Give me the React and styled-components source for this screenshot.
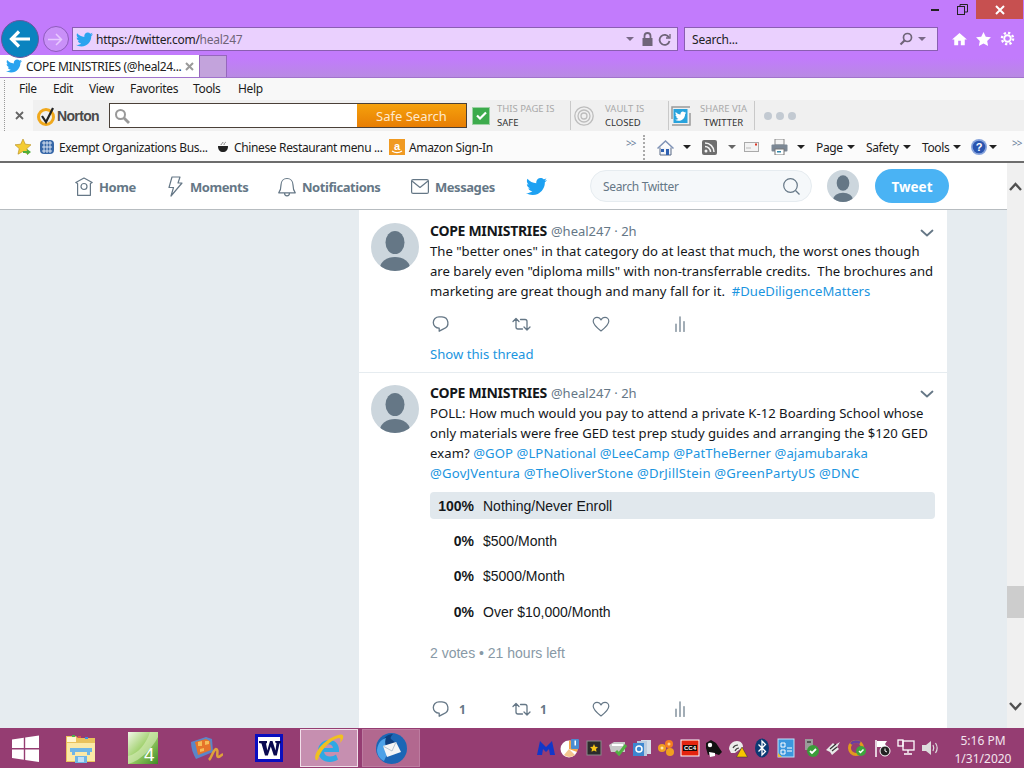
import React from "react";
import styled, { createGlobalStyle } from "styled-components";
import { FaTwitter } from "react-icons/fa";

const Global = createGlobalStyle`
  html, body { margin: 0; padding: 0; width: 1024px; height: 768px; overflow: hidden; background: #fff; }
  * { box-sizing: border-box; }
  svg { flex: none; }
`;
const UI = `"Noto Sans", "Open Sans", sans-serif`;
const Page = styled.div`width:1024px;height:768px;display:flex;flex-direction:column;overflow:hidden;font-family:${UI};color:#111;`;

/* ---------- browser chrome ---------- */
const Chrome = styled.div`height:78px;flex:none;background:linear-gradient(#c27bfc 0,#c27bfc 58px,#b88ae2 78px);position:relative;border-bottom:1px solid #a173cc;`;
const WindowControls = styled.div`height:19px;display:flex;justify-content:flex-end;align-items:flex-start;padding-right:1px;`;
const WinBtn = styled.div`width:${p=>p.$w}px;height:19px;display:flex;align-items:center;justify-content:center;background:${p=>p.$close?"#c75050":"transparent"};`;
const AddressRow = styled.div`height:38px;display:flex;align-items:flex-start;padding-left:1px;position:relative;z-index:2;`;
const BackBtn = styled.div`width:38px;height:38px;border-radius:50%;background:#0a83bf;border:1px solid #6a55a0;display:flex;align-items:center;justify-content:center;flex:none;margin-top:1px;`;
const ForwardBtn = styled.div`width:26px;height:26px;border-radius:50%;border:1px solid #8e5cbc;background:#c990f8;display:flex;align-items:center;justify-content:center;flex:none;margin:7px 0 0 4px;`;
const UrlBox = styled.div`height:24px;margin-top:8px;background:#ead0fe;border:1px solid #8a5eb2;display:flex;align-items:center;`;
const AddressBox = styled(UrlBox)`width:606px;margin-left:3px;padding:0 6px 0 3px;`;
const SearchBox = styled(UrlBox)`width:254px;margin-left:6px;padding:0 11px 0 7px;font-size:12px;color:#222;justify-content:space-between;letter-spacing:-.2px;`;
const SearchTools = styled.span`display:flex;align-items:center;`;
const Url = styled.span`font-size:12px;letter-spacing:-.25px;margin-left:3px;color:#222;flex:1;white-space:nowrap;& em{font-style:normal;color:#6f6478;}`;
const RightTools = styled.div`display:flex;align-items:center;gap:9px;margin:12px 0 0 14px;`;
const TabRow = styled.div`height:22px;display:flex;position:absolute;left:0;bottom:0;`;
const ActiveTab = styled.div`width:199px;height:22px;background:#fff;display:flex;align-items:center;padding:0 5px 0 6px;font-size:12px;letter-spacing:-.35px;color:#222;white-space:nowrap;`;
const TabLabel = styled.span`flex:1;margin-left:4px;`;
const NewTab = styled.div`width:28px;height:22px;background:#c3a3dc;border:1px solid #9667bd;border-bottom:none;`;

const Toolbars = styled.div`height:85px;flex:none;background:#f8f8f8;border-bottom:2px solid #6d6d6d;position:relative;`;
const Grip = styled.div`position:absolute;left:4px;top:2px;bottom:2px;border-left:1px dotted #999;`;
const MenuBar = styled.div`height:22px;display:flex;align-items:center;padding:0 0 2px 19px;font-size:12px;letter-spacing:-.35px;color:#1c1c1c;`;
const MenuItem = styled.span`width:${p=>p.$w}px;`;
const NortonRow = styled.div`height:31px;display:flex;align-items:center;position:relative;`;
const CloseX = styled.div`width:33px;display:flex;justify-content:center;padding-left:5px;`;
const NortonBand = styled.div`flex:1;height:31px;background:#f0f0f0;display:flex;align-items:center;`;
const NortonLogo = styled.div`width:76px;display:flex;align-items:center;padding-left:4px;font:bold 14px "Liberation Sans",sans-serif;letter-spacing:-.65px;color:#4a4a4a;`;
const NortonSearch = styled.div`width:358px;height:25px;border:1px solid #4a4038;background:#fff;display:flex;align-items:center;`;
const SafeBtn = styled.div`width:109px;height:23px;margin-left:auto;background:linear-gradient(#f5a10c,#e87e04);color:#ffe9cc;font-size:13px;display:flex;align-items:center;justify-content:center;`;
const Shield = styled.div`width:18px;height:18px;background:#3cab4c;border:1px solid #9fd3a6;margin-left:5px;display:flex;align-items:center;justify-content:center;flex:none;`;
const NSlot = styled.div`width:${p=>p.$w}px;padding-left:${p=>p.$pl||0}px;font-size:9.5px;line-height:14px;color:#aaa;white-space:nowrap;text-align:${p=>p.$center?"center":"left"};& b{display:block;font-weight:400;color:#333;}`;
const NSep = styled.div`width:1px;height:29px;background:#c9c9c9;flex:none;`;
const NIcon = styled.div`width:${p=>p.$w}px;display:flex;justify-content:center;flex:none;`;
const Dots = styled.div`display:flex;gap:4px;margin-left:9px;& i{width:8px;height:8px;border-radius:50%;background:#c3cad2;}`;
const FavRow = styled.div`height:30px;display:flex;align-items:center;font-size:12px;letter-spacing:-.36px;color:#1c1c1c;background:#fbfbfb;position:relative;padding:2px 0 0 15px;`;
const FavItem = styled.div`display:flex;align-items:center;white-space:nowrap;width:${p=>p.$w}px;flex:none;gap:${p=>p.$gap||4}px;`;
const Chevrons = styled.span`font-size:10px;color:#6a7f9c;width:${p=>p.$w}px;flex:none;margin-top:-8px;letter-spacing:-1px;`;
const DotSep = styled.div`height:25px;border-left:2px dotted #aaa;width:14px;flex:none;`;
const Caret = styled.i`display:inline-block;width:0;height:0;border-left:4px solid transparent;border-right:4px solid transparent;border-top:4px solid ${p=>p.$c||"#222"};margin-left:${p=>p.$ml||4}px;flex:none;`;
const CmdItem = styled.div`display:flex;align-items:center;width:${p=>p.$w}px;flex:none;`;

/* ---------- twitter ---------- */
const Main = styled.div`flex:1;min-height:0;display:flex;`;
const Site = styled.div`flex:1;min-width:0;display:flex;flex-direction:column;background:#e6ecf0;`;
const Nav = styled.div`height:47px;flex:none;background:#fff;border-bottom:1px solid #b7bcc0;display:flex;align-items:center;padding-left:75px;`;
const NavLink = styled.div`display:flex;align-items:center;width:${p=>p.$w}px;flex:none;gap:${p=>p.$gap}px;padding-top:1px;font:700 13px "Noto Sans",sans-serif;letter-spacing:-.45px;color:#657786;white-space:nowrap;`;
const SearchField = styled.div`width:222px;height:32px;margin-left:23px;border:1px solid #e6ecf0;border-radius:16px;background:#f5f8fa;display:flex;align-items:center;justify-content:space-between;padding:1px 11px 0 12px;font-size:12px;letter-spacing:-.35px;color:#657786;flex:none;`;
const TweetBtn = styled.div`width:74px;height:34px;border-radius:17px;background:#4ab3f4;color:#fff;padding-top:1px;font:700 13.5px "Noto Sans",sans-serif;display:flex;align-items:center;justify-content:center;margin-left:16px;flex:none;`;
const NavAvatar = styled.span`margin-left:15px;line-height:0;flex:none;`;
const NavBird = styled.span`margin:0 20px 0 -1px;line-height:0;flex:none;`;
const Feed = styled.div`flex:1;min-height:0;overflow:hidden;padding-left:359px;`;
const Column = styled.div`width:588px;background:#fff;height:100%;`;
const Tweet = styled.div`display:flex;padding:${p=>p.$pt}px 12px 0 12px;border-bottom:${p=>p.$border?"1px solid #e6ecf0":"none"};height:${p=>p.$h}px;position:relative;`;
const Body = styled.div`margin-left:11px;flex:1;min-width:0;`;
const Header = styled.div`height:20px;line-height:20px;font-size:13px;white-space:nowrap;color:#657786;margin-top:-2px;display:flex;`;
const Name = styled.span`font-weight:700;font-size:14px;color:#14171a;letter-spacing:-.3px;margin-right:4px;`;
const Line = styled.div`font-size:13.13px;line-height:20px;color:#14171a;white-space:pre;letter-spacing:${p=>p.$ls||0}px;`;
const Link = styled.span`color:#1b95e0;`;
const ThreadLink = styled.div`font-size:13.13px;color:#1b95e0;line-height:20px;margin-top:10px;`;
const Chevron = styled.div`position:absolute;right:13px;top:${p=>p.$t}px;color:#657786;line-height:0;`;
const Actions = styled.div`display:flex;height:20px;margin-top:${p=>p.$mt}px;align-items:center;padding-left:2px;`;
const Action = styled.div`width:${p=>p.$w}px;flex:none;display:flex;align-items:center;gap:9px;font:700 12px "Noto Sans",sans-serif;color:#657786;`;
const Poll = styled.div`margin:9px 0 0 0;font-family:"Liberation Sans",Arial,sans-serif;font-size:14px;color:#14171a;`;
const PollRow = styled.div`height:${p=>p.$h}px;display:flex;align-items:center;border-radius:4px;width:505px;background:${p=>p.$win?"#e1e8ed":"transparent"};`;
const Pct = styled.b`width:44px;text-align:right;flex:none;margin-right:9px;`;
const Votes = styled.div`font:14px "Liberation Sans",Arial,sans-serif;color:#8899a6;margin-top:8px;line-height:20px;`;
const Scrollbar = styled.div`width:17px;flex:none;background:#f0f0f0;display:flex;flex-direction:column;align-items:center;color:#505050;position:relative;`;
const ScrollBtn = styled.div`height:${p=>p.$h}px;flex:none;display:flex;align-items:center;justify-content:center;margin-top:${p=>p.$mt||0}px;`;
const Thumb = styled.div`width:17px;height:32px;background:#cdcdcd;flex:none;margin-top:${p=>p.$mt}px;`;

/* ---------- taskbar ---------- */
const Taskbar = styled.div`height:40px;flex:none;background:#953d72;display:flex;align-items:center;position:relative;`;
const TaskSlot = styled.div`width:${p=>p.$w}px;height:38px;flex:none;display:flex;align-items:center;justify-content:center;margin-left:${p=>p.$ml||0}px;
  background:${p=>p.$active?"#c68fb0":p.$open?"#b2688f":"transparent"};border:${p=>p.$active?"1px solid #f1dfe9":p.$open?"1px solid #bd7ca0":"none"};`;
const Tray = styled.div`display:flex;align-items:center;margin-left:114px;`;
const TrayIcon = styled.div`width:${p=>p.$w||24}px;display:flex;justify-content:center;flex:none;`;
const Clock = styled.div`width:90px;font-size:12px;line-height:18px;color:#f3e5ee;text-align:center;flex:none;margin-left:-4px;padding-top:3px;`;

const S = ({ s = 20, vb = "0 0 20 20", children, ...r }) => <svg width={s} height={s} viewBox={vb} {...r}>{children}</svg>;

const Avatar = ({ s = 48 }) => (
  <svg width={s} height={s} viewBox="0 0 48 48">
    <defs><clipPath id={"av" + s}><circle cx="24" cy="24" r="24" /></clipPath></defs>
    <circle cx="24" cy="24" r="24" fill="#ccd6dd" />
    <g clipPath={`url(#av${s})`} fill="#657786">
      <ellipse cx="24" cy="19.5" rx="9.5" ry="11.5" />
      <ellipse cx="24" cy="45" rx="15" ry="11" />
    </g>
  </svg>
);
const Reply = () => <S s={18} vb="0 0 18 18"><path d="M7.5 2.2h3a6.2 6.2 0 0 1 1.6 12.1L7.7 16.6v-3H7.5a5.7 5.7 0 0 1 0-11.4z" transform="translate(-.5 -.4)" fill="none" stroke="#657786" strokeWidth="1.3" strokeLinejoin="round" /></S>;
const Retweet = () => <S s={19} vb="0 0 19 18"><g fill="none" stroke="#657786" strokeWidth="1.3" strokeLinecap="round" strokeLinejoin="round"><path d="M1 6l3-3 3 3M4 3.2v8.300a2 2 0 0 0 2 2h4.500" /><path d="M18 11.500l-3 3-3-3M15 14.300V6a2 2 0 0 0-2-2H8.500" /></g></S>;
const Heart = () => <S s={18} vb="0 0 18 18"><path d="M9 16C4 12 1.200 9.400 1.200 6.200 1.200 3.900 3 2.300 5 2.300c1.700 0 3.200.9 4 2.600.8-1.700 2.300-2.600 4-2.600 2 0 3.800 1.600 3.800 3.900C16.800 9.400 14 12 9 16z" fill="none" stroke="#657786" strokeWidth="1.200" strokeLinejoin="round" /></S>;
const Stats = () => <svg width="14" height="16" viewBox="0 0 14 16"><g stroke="#657786" strokeWidth="1.200" strokeLinecap="round"><path d="M3 8v7.500M7 .8v14.700M11 5.500v10" /></g></svg>;
const Down = () => <svg width="14" height="14" viewBox="0 0 14 14"><path d="M1.500 4.500L7 9.500l5.500-5" fill="none" stroke="#657786" strokeWidth="1.800" strokeLinecap="round" strokeLinejoin="round" /></svg>;

const ActionsRow = ({ mt, counts }) => (
  <Actions $mt={mt}>
    <Action $w={80}><Reply />{counts && "1"}</Action>
    <Action $w={80}><Retweet />{counts && "1"}</Action>
    <Action $w={81}><Heart /></Action>
    <Action $w={20}><Stats /></Action>
  </Actions>
);

const TweetHeader = () => (
  <Header><Name>COPE MINISTRIES</Name><span>@heal247 · 2h</span></Header>
);

const Windows = () => <S s={27} vb="0 0 27 27"><path fill="#fff" d="M0 4.500l11.800-1.700v10.300H0zM13.200 2.600L27 .5v12.600H13.200zM0 14.500h11.800v10.300L0 23.100zM13.200 14.500H27V27l-13.800-2z" /></S>;
const Explorer = () => <S s={32} vb="0 0 32 32"><path fill="#e9c25c" d="M1 4h10l2 2h17v24H1z" /><path fill="#fbe9a6" d="M2 11h28v18H2z" /><path fill="#fff6d0" d="M2 5h9v5H2z" /><rect x="7" y="3" width="3" height="2" fill="#4caf50" /><rect x="20" y="5" width="3" height="2" fill="#3a8fe0" /><rect x="13" y="4" width="3" height="2" fill="#d9534f" /><path fill="#6fb6e6" d="M5 16h22v4h-2v3h-3v-3H10v3H7v-3H5zM10 24h12v7H10z" /><path fill="#bfe0f5" d="M13 25h6v5h-6z" /></S>;
const Four = () => <svg width="30" height="32" viewBox="0 0 30 32"><defs><linearGradient id="fg" x1="0" y1="0" x2="1" y2="1"><stop offset="0" stopColor="#f2f7e8" /><stop offset=".5" stopColor="#9bcf66" /><stop offset="1" stopColor="#3f8a26" /></linearGradient></defs><rect width="30" height="32" fill="url(#fg)" /><path d="M0 24C10 22 18 12 22 0h8v5C24 16 14 28 0 32z" fill="#d8ecbd" opacity=".6" /><text x="16" y="29" fontFamily="Liberation Sans" fontSize="19" fill="#fff">4</text></svg>;
const Movie = () => <S s={33} vb="0 0 33 33"><path d="M1 10l15-5 6 2 1 13-17 7C3 22 1 16 1 10z" fill="#5b86c8" /><path d="M5 10l11-3 4 2 1 9-13 5z" fill="#e6742a" /><path d="M8 10v4h4V9zM15 9v4l4-1V9zM10 17v3l4-1v-3z" fill="#f6bb55" /><path d="M19 28c3-3 4-10 7-11 3 0 0 8 2 8 2 0 3-2 5-3" fill="none" stroke="#e0a23a" strokeWidth="2.500" /></S>;
const Word = () => <S s={28} vb="0 0 28 28"><rect width="28" height="28" fill="#0a0fbf" /><rect x="3" y="3" width="22" height="22" fill="#fff" /><path fill="#0a0a50" d="M4 7h8v2l-1 .4 1.300 7L15 7h2.500l3 9.500L21.500 9l-1.300-.4V7H26v2l-1.500.4-2.700 12h-3l-3-9-3 9H10L6.500 9.400 4 9z" /></S>;
const IE = () => <S s={32} vb="0 0 32 32"><path d="M16 8c6 0 10 4 10 10v2H11c.5 3 3 4.500 6 4.500 2.500 0 4.500-1 6-2l2 5c-2 1.500-5 2.500-8 2.500-7 0-12-4.500-12-11S10 8 16 8zm-5 8h9c-.4-2.500-2-3.700-4.500-3.700S11.500 13.500 11 16z" fill="#2fa8e4" /><path d="M3 28C0 24 6 12 20 5c5-2.500 9-3.500 10-1.500 1 1.500-.5 5-3 7.500.8-2.500 1-4.500-.5-5C23 5 9 14 5 27c-.5 1.500-1.300 1.600-2 1z" fill="#f0c020" /></S>;
const Thunderbird = () => <S s={33} vb="0 0 33 33"><circle cx="16.500" cy="16.500" r="15.500" fill="#1c66b5" /><path d="M5 12c3-6 8-10 13-10-2 2-3 4-2 5l6 5-8 5z" fill="#0e3f7f" /><path d="M2 18C3 10 7 7 11 6c-2 5 0 10 3 12l-5 11C5 27 2 23 2 18z" fill="#4da2e8" /><path d="M8 14l13-4 5 10-14 5z" fill="#f5f5f5" /><path d="M8 14l9 5 4-9" fill="none" stroke="#b8c4d0" /></S>;

const trayIcons = [
  <S><path fill="#1237c9" d="M1 17L4 3l6 6 6-6 3 14h-5l-1-6-3 3-3-3-1 6z" /></S>,
  <S><circle cx="9" cy="11" r="8.500" fill="#fff" /><path d="M9 11V2.500A8.500 8.500 0 0 1 17 14z" fill="#f6a84a" /><path d="M9 11l6 6a8.500 8.500 0 0 1-11 0z" fill="#f3c48e" /><rect x="11" y="1" width="8" height="10" rx="1" fill="#4b8dd1" /><rect x="14.500" y="2.500" width="1.500" height="5" fill="#fff" /></S>,
  <S><rect x="3" y="3" width="14" height="14" fill="#2b2b2b" stroke="#8a8a8a" /><path fill="#f5c518" d="M10 6l1.200 2.700 2.800.3-2 2 .5 2.800L10 12.500l-2.500 1.300.5-2.800-2-2 2.800-.3z" /></S>,
  <S><path fill="#c8c8c8" d="M1 7l5-3h11v10H3z" /><path fill="#fff" d="M4 6h11v2H4z" /><path d="M8 13l3 3 7-9" fill="none" stroke="#52b043" strokeWidth="3" /></S>,
  <S><rect x="9" y="2" width="10" height="14" fill="#d5dee8" /><rect x="5" y="3" width="10" height="15" fill="#b9cbdf" /><rect x="1" y="5" width="11" height="13" fill="#3d87d0" /><circle cx="7" cy="11" r="3" fill="none" stroke="#fff" strokeWidth="1.500" /></S>,
  <S><circle cx="6" cy="10" r="4" fill="#f0a020" /><circle cx="13" cy="6" r="4" fill="#f47d20" /><circle cx="14" cy="14" r="4" fill="#f0a020" /><circle cx="6" cy="10" r="1.500" fill="#ffe3a8" /><circle cx="13" cy="6" r="1.500" fill="#ffd28a" /></S>,
  <S><rect x="1" y="2" width="18" height="16" fill="#e4240f" stroke="#fff" /><rect x="3" y="7" width="14" height="6" fill="#1b0b08" /><text x="10" y="12" fontSize="6" fill="#fff" fontFamily="Liberation Sans" fontWeight="700" textAnchor="middle">CC4</text></S>,
  <S><path fill="#111" d="M2 5l5-3 5 3 6 9-3 3-6-2-5 2-2-7z" /><circle cx="6" cy="7" r="2.200" fill="#fff" /><path fill="#fff" d="M5 14l6 1v3l-5 1z" /></S>,
  <S><path fill="#ececec" d="M1 11c0-5 4-8 8-8s6 3 6 6l-8 6H3z" /><path d="M5 10c1-2 3-3 5-3M7 13c1-2 2-3 4-3" fill="none" stroke="#444" strokeWidth="1.200" /><path fill="#f7c600" stroke="#333" strokeWidth=".5" d="M14 9l5.500 10h-11z" /></S>,
  <S><ellipse cx="10" cy="10" rx="7" ry="9.500" fill="#0b3a73" /><path d="M6.500 6.500l7 7-3.500 3.500V3l3.500 3.500-7 7" fill="none" stroke="#fff" strokeWidth="1.300" /></S>,
  <S><rect x="2" y="1" width="16" height="18" fill="#3b97de" stroke="#bfe3fa" /><path d="M5 5h4v4H5zM11 10h5M11 13h5M5 12h4v4H5z" fill="none" stroke="#fff" /><path d="M2 15l4 4H2z" fill="#e8c23a" /></S>,
  <S><rect x="5" y="1" width="8" height="11" fill="#9b9b9b" /><rect x="7" y="3" width="4" height="2" fill="#555" /><circle cx="13" cy="13" r="6" fill="#3a9c3a" /><path d="M10 13l2 2 4-4" fill="none" stroke="#fff" strokeWidth="1.800" /></S>,
  <S><path fill="#e8e8e8" d="M2 12l7-7 2 2 5-3-3 5 2 2-7 6-2-3z" /><path d="M6 11l6-5M8 13l5-4" stroke="#333" strokeWidth="1.200" /></S>,
  <S><circle cx="8" cy="10" r="6.500" fill="none" stroke="#e09a1e" strokeWidth="3" /><path d="M3 6a7 7 0 0 1 9-1" fill="none" stroke="#6b3fa0" strokeWidth="3" /><circle cx="13" cy="13" r="5" fill="#3da63d" /><path d="M11 13l1.500 1.500 3-3" fill="none" stroke="#fff" strokeWidth="1.500" /></S>,
  <S><path d="M4 2v17" stroke="#fff" strokeWidth="1.500" /><path fill="#fff" d="M5 3h10l-2 3 2 3H5z" /><circle cx="13" cy="13" r="5" fill="#222" stroke="#fff" /><path d="M13 10.500V13l2 1" stroke="#fff" fill="none" /></S>,
  <S><g fill="none" stroke="#fff" strokeWidth="1.300"><rect x="7" y="3" width="11" height="9" /><path d="M12 12v3M8 16h8" /><rect x="2" y="2" width="5" height="6" /></g></S>,
  <S><path fill="#ddd" d="M2 7h4l5-4v14l-5-4H2z" /><path d="M13 7c1 2 1 4 0 6M15.500 5c2 3 2 7 0 10" fill="none" stroke="#ddd" strokeWidth="1.200" /></S>,
];

export default function App() {
  return (
    <Page>
      <Global />
      <Chrome>
        <WindowControls>
          <WinBtn $w={27}><svg width="9" height="4"><rect width="8" height="2" y="1" fill="#222" /></svg></WinBtn>
          <WinBtn $w={27}><svg width="11" height="11" fill="none" stroke="#222"><rect x=".5" y="2.500" width="7" height="8" /><path d="M3 2.500V.5h7.500v7.500H8" /></svg></WinBtn>
          <WinBtn $w={47} $close><svg width="10" height="10" stroke="#fff" strokeWidth="2"><path d="M1 1l8 8M9 1l-8 8" /></svg></WinBtn>
        </WindowControls>
        <AddressRow>
          <BackBtn><svg width="22" height="18" viewBox="0 0 22 18" fill="none" stroke="#fff" strokeWidth="3.200"><path d="M21 9H3M10 1.500L2.500 9l7.500 7.500" /></svg></BackBtn>
          <ForwardBtn><svg width="16" height="13" viewBox="0 0 16 13" fill="none" stroke="#e8c9ff" strokeWidth="1.500"><path d="M0 6.500h14M8 1l5.500 5.500L8 12" /></svg></ForwardBtn>
          <AddressBox>
            <FaTwitter size={17} color="#2aa3ef" />
            <Url>https://twitter.com/<em>heal247</em></Url>
            <Caret $c="#7a6a88" />
            <svg width="13" height="14" viewBox="0 0 13 14" style={{ marginLeft: 7 }}><path d="M3.500 6V4a3 3 0 0 1 6 0v2" fill="none" stroke="#6f6478" strokeWidth="1.800" /><rect x="1.500" y="6" width="10" height="8" fill="#6f6478" /></svg>
            <svg width="13" height="13" viewBox="0 0 13 13" fill="none" stroke="#6f6478" strokeWidth="1.800" style={{ marginLeft: 4 }}><path d="M11 4.500A5 5 0 1 0 11.500 8" /><path d="M12 1v4H8" strokeWidth="1.300" /></svg>
          </AddressBox>
          <SearchBox>
            <span>Search...</span>
            <SearchTools>
              <svg width="14" height="14" viewBox="0 0 14 14" fill="none" stroke="#6f6478" strokeWidth="1.700"><circle cx="8.500" cy="5.500" r="4" /><path d="M5.500 8.500L1.500 12.500" strokeWidth="2.200" /></svg>
              <Caret $c="#7a6a88" $ml={5} />
            </SearchTools>
          </SearchBox>
          <RightTools>
            <svg width="15" height="14" viewBox="0 0 17 16" fill="#fff"><path d="M8.500 1L0 8.500h2.500V15h4.500v-5h3v5h4.500V8.500H17z" /></svg>
            <svg width="15" height="14" viewBox="0 0 17 16" fill="#fff"><path d="M8.500 0l2.600 5.400 5.900.7-4.300 4.100 1.100 5.800-5.300-2.900-5.300 2.900 1.100-5.800L0 6.100l5.900-.7z" /></svg>
            <svg width="15" height="15" viewBox="0 0 16 16" fill="none" stroke="#fff"><circle cx="8" cy="8" r="3.500" strokeWidth="2" /><circle cx="8" cy="8" r="6" strokeWidth="2.500" strokeDasharray="2.400 2.300" /></svg>
          </RightTools>
        </AddressRow>
        <TabRow>
          <ActiveTab>
            <FaTwitter size={16} color="#2aa3ef" />
            <TabLabel>COPE MINISTRIES (@heal24...</TabLabel>
            <svg width="9" height="9" stroke="#9a9a9a" strokeWidth="2"><path d="M1 1l7 7M8 1L1 8" /></svg>
          </ActiveTab>
          <NewTab />
        </TabRow>
      </Chrome>
      <Toolbars>
        <Grip />
        <MenuBar>
          <MenuItem $w={34}>File</MenuItem>
          <MenuItem $w={36}>Edit</MenuItem>
          <MenuItem $w={41}>View</MenuItem>
          <MenuItem $w={63}>Favorites</MenuItem>
          <MenuItem $w={45}>Tools</MenuItem>
          <MenuItem $w={40}>Help</MenuItem>
        </MenuBar>
        <NortonRow>
          <CloseX><svg width="9" height="9" stroke="#666" strokeWidth="1.800"><path d="M1 1l7 7M8 1L1 8" /></svg></CloseX>
          <NortonBand>
            <NortonLogo>
              <svg width="20" height="20" viewBox="0 0 20 20"><circle cx="9" cy="11" r="7.500" fill="none" stroke="#f0a81c" strokeWidth="3" /><path d="M5 10l4 6L16 2" fill="none" stroke="#222" strokeWidth="2.200" /></svg>
              Norton
            </NortonLogo>
            <NortonSearch>
              <svg width="16" height="16" viewBox="0 0 16 16" fill="none" stroke="#999" strokeWidth="2" style={{ marginLeft: 4 }}><circle cx="6.500" cy="6.500" r="4.500" /><path d="M10 10l5 5" strokeWidth="2.800" /></svg>
              <SafeBtn>Safe Search</SafeBtn>
            </NortonSearch>
            <Shield><svg width="11" height="9" fill="none" stroke="#fff" strokeWidth="2.200"><path d="M1 4.500l3 3 6-6" /></svg></Shield>
            <NSlot $w={80} $pl={7}>THIS PAGE IS<b>SAFE</b></NSlot>
            <NSep />
            <NIcon $w={26}><svg width="20" height="20" viewBox="0 0 20 20" fill="none" stroke="#bdbdbd"><circle cx="10" cy="10" r="9.200" strokeWidth="1.300" /><circle cx="10" cy="10" r="6" strokeWidth="1.300" /><circle cx="10" cy="10" r="3" strokeWidth="1.300" /></svg></NIcon>
            <NSlot $w={71} $pl={8}>VAULT IS<b>CLOSED</b></NSlot>
            <NSep />
            <NIcon $w={24}><svg width="20" height="20" viewBox="0 0 20 20"><path d="M1 13V1h18M19 7v12H1" fill="none" stroke="#999" strokeWidth="1.500" /><rect x="2.500" y="3" width="14" height="14" fill="#28a3dd" /><g transform="translate(4 4.500) scale(.022)"><path fill="#fff" d="M459 152c.3 4.500.3 9 .3 13.600C459.300 304.300 353.800 464 161 464c-59.500 0-114.800-17.200-161.300-47.100 8.500 1 16.600 1.300 25.400 1.300 49 0 94.100-16.600 130.100-44.800-46.100-1-84.800-31.200-98.100-72.800 6.500 1 13 1.600 19.800 1.600 9.400 0 18.800-1.300 27.600-3.600-48.100-9.700-84.100-52-84.100-103v-1.300c14 7.800 30.200 12.700 47.400 13.300-28.300-18.800-46.800-51-46.800-87.400 0-19.500 5.200-37.400 14.300-53C87.400 130.900 165 172.400 252.100 176.900c-1.600-7.800-2.600-15.900-2.600-24C249.500 95.100 296.300 48 354.400 48c30.200 0 57.500 12.700 76.700 33.100 23.700-4.500 46.500-13.300 66.600-25.400-7.800 24.300-24.300 44.800-46.100 57.800 21.100-2.300 41.600-8.100 60.400-16.200-14.300 20.800-32.200 39.300-52.600 54.300z" /></g></svg></NIcon>
            <NSlot $w={61} $center>SHARE VIA<b>TWITTER</b></NSlot>
            <NSep />
            <Dots><i /><i /><i /></Dots>
          </NortonBand>
        </NortonRow>
        <FavRow>
          <FavItem $w={24}><svg width="16" height="16" viewBox="0 0 16 16"><path fill="#f4cc35" stroke="#b48a1a" strokeWidth=".6" d="M8 0l2.300 5.200 5.700.6-4.200 3.800 1.200 5.600L8 12.400l-5 2.800 1.200-5.600L0 5.800l5.700-.6z" /><path fill="#4fae3a" d="M8 12h4V10l4 3-4 3v-2H8z" /></svg></FavItem>
          <FavItem $w={178}><svg width="16" height="16" viewBox="0 0 16 16"><rect x="1" y="1" width="14" height="14" rx="4" fill="#3868a8" /><path d="M3 4h10M3 8h10M3 12h10M5 2v12M8 2v12M11 2v12" stroke="#e6eef8" strokeWidth=".9" /></svg>Exempt Organizations Bus...</FavItem>
          <FavItem $w={172} $gap={5}><svg width="12" height="12" viewBox="0 0 12 12"><path fill="#222" d="M1 5h10c0 4-2 6-5 6S1 9 1 5z" /><path d="M4 4c0-2 2-1 2-3M7 4c0-2 1-2 2-3" fill="none" stroke="#888" /></svg>Chinese Restaurant menu ...</FavItem>
          <FavItem $w={237}><svg width="16" height="16" viewBox="0 0 16 16"><rect width="16" height="16" fill="#f09a22" /><text x="8" y="11" fontSize="11" fill="#fff" textAnchor="middle" fontFamily="Liberation Sans" fontWeight="700">a</text><path d="M3 12c3 2 7 2 10 0" fill="none" stroke="#fff" strokeWidth="1.200" /></svg>Amazon Sign-In</FavItem>
          <Chevrons $w={17}>&gt;&gt;</Chevrons>
          <DotSep />
          <CmdItem $w={45}><svg width="17" height="17" viewBox="0 0 17 17"><path fill="#f2f4f8" stroke="#5b6a86" d="M3 8.500V16h11V8.500" /><path fill="#7f93b6" d="M8.500 1L0 9l1 1 7.500-7L16 10l1-1z" /><rect x="4" y="10" width="3" height="3" fill="#2d5fb0" /><rect x="9" y="10" width="3" height="6" fill="#2d5fb0" /></svg><Caret $ml={9} /></CmdItem>
          <CmdItem $w={42}><svg width="15" height="15" viewBox="0 0 15 15"><rect width="15" height="15" rx="2" fill="#6e6e6e" /><circle cx="4" cy="11" r="1.500" fill="#f2f2f2" /><path d="M3 6.500A5.500 5.500 0 0 1 8.500 12M3 3a9 9 0 0 1 9 9" fill="none" stroke="#f2f2f2" strokeWidth="1.500" /></svg><Caret $ml={11} $c="#666" /></CmdItem>
          <CmdItem $w={27}><svg width="15" height="10" viewBox="0 0 15 10"><rect x=".5" y=".5" width="14" height="9" fill="#f3f3f3" stroke="#aaa" /><rect x="11" y="1.500" width="2" height="2" fill="#d32" /><path d="M2 6h5" stroke="#bbb" /></svg></CmdItem>
          <CmdItem $w={45}><svg width="17" height="16" viewBox="0 0 17 16"><rect x="4" y="0" width="9" height="6" fill="#f4f4f4" stroke="#888" /><rect x=".5" y="5.500" width="16" height="7" rx="1" fill="#7b8794" /><rect x="4" y="10" width="9" height="6" fill="#fff" stroke="#777" /><rect x="6" y="12" width="4" height="1.500" fill="#38a" /></svg><Caret $ml={9} /></CmdItem>
          <CmdItem $w={50}>Page<Caret /></CmdItem>
          <CmdItem $w={56}>Safety<Caret /></CmdItem>
          <CmdItem $w={49}>Tools<Caret /></CmdItem>
          <CmdItem $w={41}><svg width="16" height="16" viewBox="0 0 16 16"><circle cx="8" cy="8" r="8" fill="#86a3dc" /><circle cx="8" cy="8" r="6.300" fill="#2a55b0" /><text x="8" y="12" fontSize="11" fontWeight="700" fill="#fff" textAnchor="middle" fontFamily="Liberation Sans">?</text></svg><Caret $ml={2} /></CmdItem>
          <Chevrons $w={13}>&gt;&gt;</Chevrons>
        </FavRow>
      </Toolbars>
      <Main>
        <Site>
          <Nav>
            <NavLink $w={93} $gap={6}>
              <svg width="18" height="20" viewBox="0 0 18 20" fill="none" stroke="#657786" strokeWidth="1.200" strokeLinejoin="round"><path d="M9 1L.8 5.500l1.800 1.100V18.300h12.800V6.600l1.800-1.100z" /><circle cx="9" cy="9.500" r="3" /></svg>
              Home
            </NavLink>
            <NavLink $w={110} $gap={7}>
              <svg width="15" height="21" viewBox="0 0 15 21" fill="none" stroke="#657786" strokeWidth="1.200" strokeLinejoin="round"><path d="M4 1h8l-2 6h4L3 20l2.500-8.500H1z" /></svg>
              Moments
            </NavLink>
            <NavLink $w={133} $gap={6}>
              <svg width="18" height="20" viewBox="0 0 18 20" fill="none" stroke="#657786" strokeWidth="1.200" strokeLinejoin="round"><path d="M9 1.500c-3.400 0-6 2.600-6 6.500 0 3.500-.8 6-2.300 7.800h16.600C15.800 14 15 11.500 15 8c0-3.900-2.600-6.500-6-6.500zM6.500 16c0 1.800 1 2.800 2.500 2.800s2.500-1 2.500-2.800" /></svg>
              Notifications
            </NavLink>
            <NavLink $w={116} $gap={6}>
              <svg width="18" height="15" viewBox="0 0 18 15" fill="none" stroke="#657786" strokeWidth="1.200" strokeLinejoin="round"><rect x=".6" y=".6" width="16.800" height="13.800" rx="1.500" /><path d="M1 2l8 6.500L17 2" /></svg>
              Messages
            </NavLink>
            <NavBird><FaTwitter size={21} color="#1da1f2" /></NavBird>
            <SearchField>
              <span>Search Twitter</span>
              <svg width="17" height="17" viewBox="0 0 17 17" fill="none" stroke="#657786" strokeWidth="1.200"><circle cx="7.500" cy="7.500" r="6.800" /><path d="M12.500 12.500l4 4" /></svg>
            </SearchField>
            <NavAvatar><Avatar s={32} /></NavAvatar>
            <TweetBtn>Tweet</TweetBtn>
          </Nav>
          <Feed>
            <Column>
              <Tweet $pt={13} $h={163} $border>
                <Avatar />
                <Body>
                  <TweetHeader />
                  <Line>{`The "better ones" in that category do at least that much, the worst ones though`}</Line>
                  <Line>{`are barely even "diploma mills" with non-transferrable credits.  The brochures and`}</Line>
                  <Line><span>{`marketing are great though and many fall for it.  `}</span><Link>#DueDiligenceMatters</Link></Line>
                  <ActionsRow mt={13} />
                  <ThreadLink>Show this thread</ThreadLink>
                </Body>
                <Chevron $t={16}><Down /></Chevron>
              </Tweet>
              <Tweet $pt={12} $h={360}>
                <Avatar />
                <Body>
                  <TweetHeader />
                  <Line>{`POLL: How much would you pay to attend a private K-12 Boarding School whose`}</Line>
                  <Line>{`only materials were free GED test prep study guides and arranging the $120 GED`}</Line>
                  <Line $ls={0.07}><span>{`exam? `}</span><Link>@GOP @LPNational @LeeCamp @PatTheBerner @ajamubaraka</Link></Line>
                  <Line $ls={0.2}><Link>@GovJVentura @TheOliverStone @DrJillStein @GreenPartyUS @DNC</Link></Line>
                  <Poll>
                    <PollRow $h={27} $win><Pct>100%</Pct>Nothing/Never Enroll</PollRow>
                    <PollRow $h={43}><Pct>0%</Pct>$500/Month</PollRow>
                    <PollRow $h={27}><Pct>0%</Pct>$5000/Month</PollRow>
                    <PollRow $h={46}><Pct>0%</Pct>Over $10,000/Month</PollRow>
                  </Poll>
                  <Votes>2 votes • 21 hours left</Votes>
                  <ActionsRow mt={36} counts />
                </Body>
                <Chevron $t={14}><Down /></Chevron>
              </Tweet>
            </Column>
          </Feed>
        </Site>
        <Scrollbar>
          <ScrollBtn $h={46}><svg width="13" height="9" viewBox="0 0 13 9" fill="none" stroke="#505050" strokeWidth="2.400"><path d="M1 8l5.500-6L12 8" /></svg></ScrollBtn>
          <Thumb $mt={377} />
          <ScrollBtn $h={16} $mt={80}><svg width="13" height="9" viewBox="0 0 13 9" fill="none" stroke="#505050" strokeWidth="2.400"><path d="M1 1l5.500 6L12 1" /></svg></ScrollBtn>
        </Scrollbar>
      </Main>
      <Taskbar>
        <TaskSlot $w={50}><Windows /></TaskSlot>
        <TaskSlot $w={62}><Explorer /></TaskSlot>
        <TaskSlot $w={62}><Four /></TaskSlot>
        <TaskSlot $w={64}><Movie /></TaskSlot>
        <TaskSlot $w={62}><Word /></TaskSlot>
        <TaskSlot $w={58} $active><IE /></TaskSlot>
        <TaskSlot $w={58} $ml={4} $open><Thunderbird /></TaskSlot>
        <Tray>
          {trayIcons.map((icon, i) => <TrayIcon key={i}>{icon}</TrayIcon>)}
        </Tray>
        <Clock>5:16 PM<br />1/31/2020</Clock>
      </Taskbar>
    </Page>
  );
}
